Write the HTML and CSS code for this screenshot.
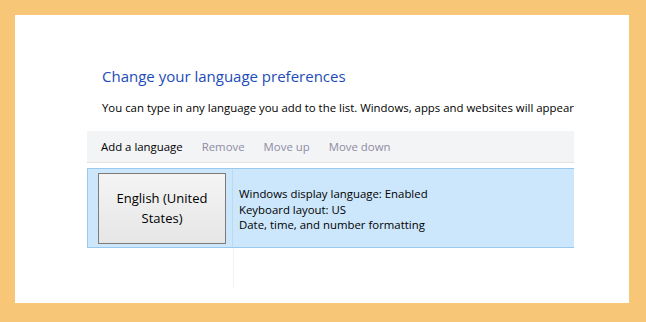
FILE: index.html
```html
<!DOCTYPE html>
<html lang="en">
<head>
    <meta charset="UTF-8" />
    <title>Language</title>
    <link rel="stylesheet" href="styles.css">
</head>
<body>
    <div class="window">
        <div class="content">
            <div class="title">Change your language preferences</div>
            <div class="intro">You can type in any language you add to the list. Windows, apps and websites will appear</div>

            <!-- Toolbar -->
            <div class="toolbar">
                <span class="tool">Add a language</span>
                <span class="tool disabled">Remove</span>
                <span class="tool disabled">Move up</span>
                <span class="tool disabled">Move down</span>
            </div>

            <!-- Language list -->
            <div class="lang-row">
                <div class="lang-cell">
                    <div class="lang-btn">English (United States)</div>
                </div>
                <div class="lang-info">
                    <div>Windows display language: Enabled</div>
                    <div>Keyboard layout: US</div>
                    <div>Date, time, and number formatting</div>
                </div>
            </div>
            <div class="list-rest">
                <div class="rest-left"></div>
            </div>
        </div>
    </div>
</body>
</html>
```

FILE: styles.css
```css
body {
    margin: 0;
    background-color: #f8c677;
    font-family: 'Open Sans', 'Liberation Sans', sans-serif;
    color: #000;
}

.window {
    margin: 15px 17px 0 15px;
    height: 288px;
    background-color: #fff;
    overflow: hidden;
}

.content {
    padding: 49px 0 0 72px;
    width: 487px;
}

.title {
    font-size: 15px;
    color: #1d4cb8;
    margin-left: 15px;
    height: 24px;
    line-height: 24px;
}

.intro {
    font-size: 11.4px;
    margin: 10px 0 0 15px;
    white-space: nowrap;
    height: 20px;
    line-height: 20px;
}

.toolbar {
    margin-top: 13px;
    height: 31px;
    background-color: #f3f4f6;
    border-bottom: 1px solid #e3e3e3;
    display: flex;
    align-items: center;
    padding-left: 14px;
    gap: 19px;
    font-size: 11.4px;
}

.disabled {
    color: #8f8ba3;
}

.lang-row {
    margin-top: 5px;
    display: flex;
    height: 78px;
    background-color: #cce6fb;
    border-top: 1px solid #99c9ef;
    border-bottom: 1px solid #99c9ef;
    border-left: 1px solid #99c9ef;
}

.lang-cell {
    width: 145px;
    border-right: 1px solid #b9daf3;
    display: flex;
    align-items: center;
    padding-left: 10px;
    box-sizing: border-box;
}

.lang-btn {
    width: 128px;
    height: 71px;
    box-sizing: border-box;
    border: 1px solid #7b7b7b;
    background: linear-gradient(#f4f4f4, #e6e6e6);
    display: flex;
    align-items: center;
    justify-content: center;
    text-align: center;
    font-size: 13px;
    line-height: 20px;
    padding: 0 14px;
}

.lang-info {
    padding: 17px 0 0 6px;
    font-size: 11.4px;
    line-height: 15.5px;
}

.list-rest {
    height: 40px;
}

.rest-left {
    width: 146px;
    height: 100%;
    border-right: 1px solid #eef4f8;
}
```
